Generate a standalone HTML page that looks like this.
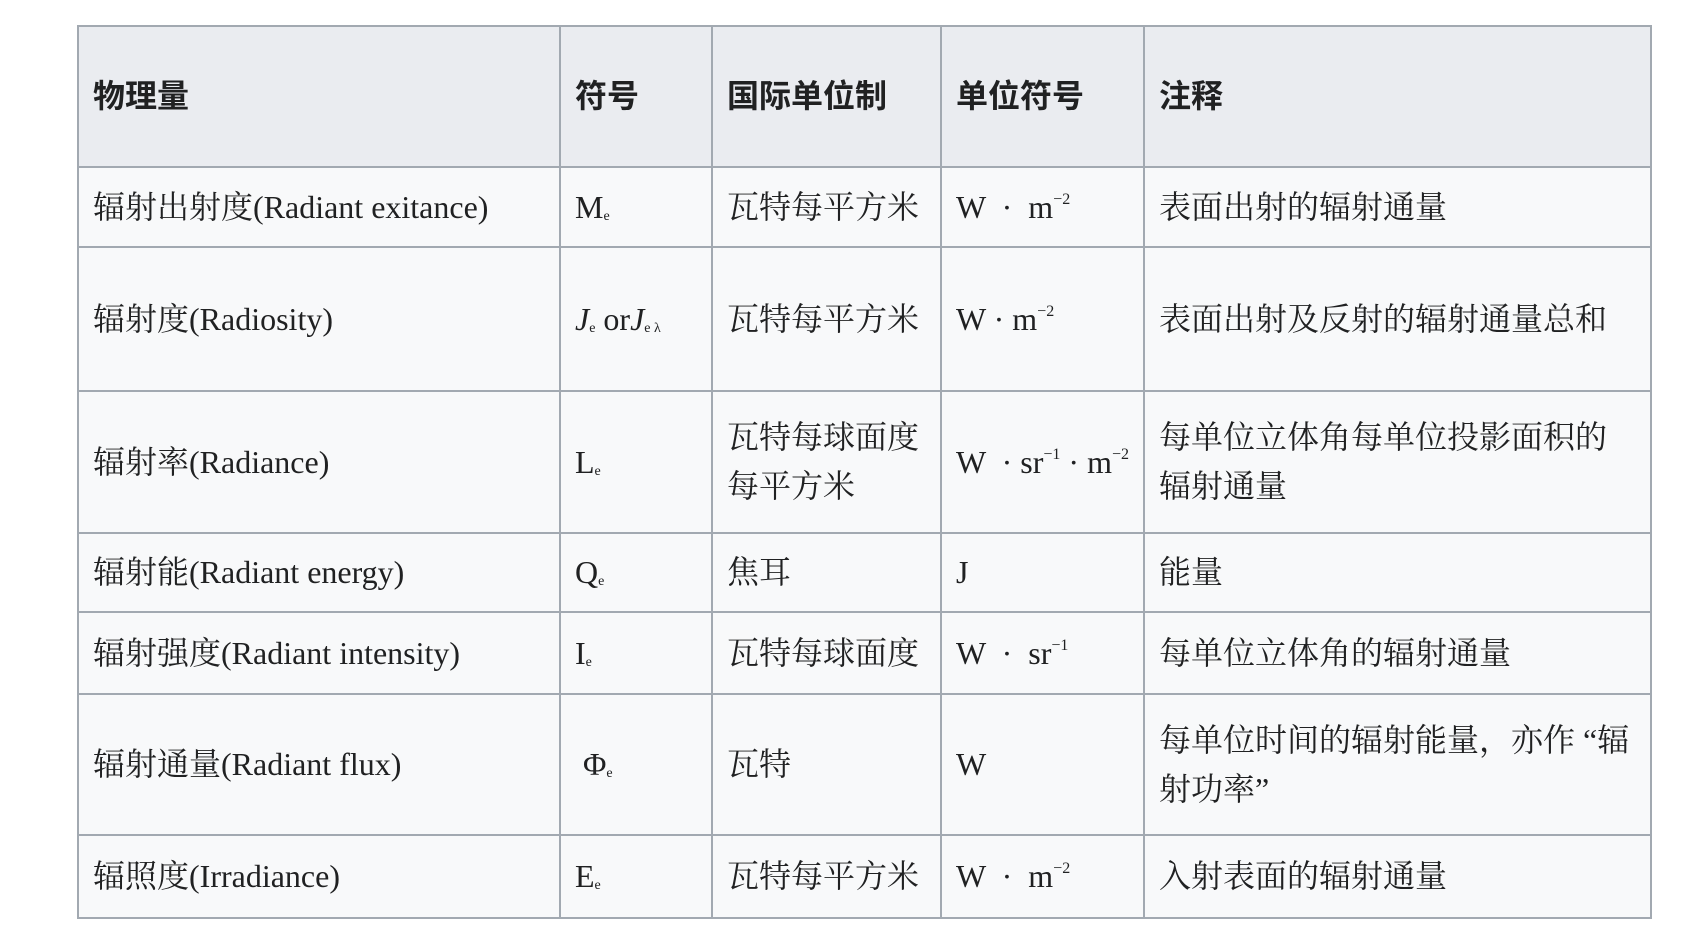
<!DOCTYPE html>
<html><head><meta charset="utf-8"><style>
body{margin:0;background:#fff;}
table{position:absolute;left:77px;top:25px;border-collapse:collapse;background:#f8f9fa;color:#202122;
font-family:"Liberation Serif","Noto Serif CJK SC",serif;font-size:32px;line-height:49px;}
td,th{border:2px solid #a2a9b1;padding:0 14px;text-align:left;vertical-align:middle;}
th{background:#eaecf0;font-family:"Liberation Sans","Noto Sans CJK SC",sans-serif;font-weight:bold;font-size:32px;}
sub{font-size:14px;vertical-align:-2px;line-height:0}
sup{font-size:16px;vertical-align:14px;line-height:0}
</style></head><body>
<table>
<colgroup><col style="width:482px"><col style="width:152px"><col style="width:229px"><col style="width:203px"><col style="width:507px"></colgroup>
<tr style="height:141px"><th>物理量</th><th>符号</th><th>国际单位制</th><th>单位符号</th><th>注释</th></tr>
<tr style="height:80px"><td>辐射出射度(Radiant exitance)</td><td>M<sub>e</sub></td><td>瓦特每平方米</td><td>W &nbsp;·&nbsp; m<sup>−2</sup></td><td>表面出射的辐射通量</td></tr>
<tr style="height:144px"><td>辐射度(Radiosity)</td><td><i>J</i><sub>e</sub> or<i>J</i><sub>e λ</sub></td><td>瓦特每平方米</td><td>W · m<sup>−2</sup></td><td>表面出射及反射的辐射通量总和</td></tr>
<tr style="height:142px"><td>辐射率(Radiance)</td><td>L<sub>e</sub></td><td>瓦特每球面度每平方米</td><td>W &nbsp;·&nbsp;sr<sup>−1</sup>&nbsp;·&nbsp;m<sup>−2</sup></td><td>每单位立体角每单位投影面积的辐射通量</td></tr>
<tr style="height:79px"><td>辐射能(Radiant energy)</td><td>Q<sub>e</sub></td><td>焦耳</td><td>J</td><td>能量</td></tr>
<tr style="height:82px"><td>辐射强度(Radiant intensity)</td><td>I<sub>e</sub></td><td>瓦特每球面度</td><td>W &nbsp;·&nbsp; sr<sup>−1</sup></td><td>每单位立体角的辐射通量</td></tr>
<tr style="height:141px"><td>辐射通量(Radiant flux)</td><td>&nbsp;Φ<sub>e</sub></td><td>瓦特</td><td>W</td><td>每单位时间的辐射能量，亦作 “辐射功率”</td></tr>
<tr style="height:83px"><td>辐照度(Irradiance)</td><td>E<sub>e</sub></td><td>瓦特每平方米</td><td>W &nbsp;·&nbsp; m<sup>−2</sup></td><td>入射表面的辐射通量</td></tr>
</table>
</body></html>
